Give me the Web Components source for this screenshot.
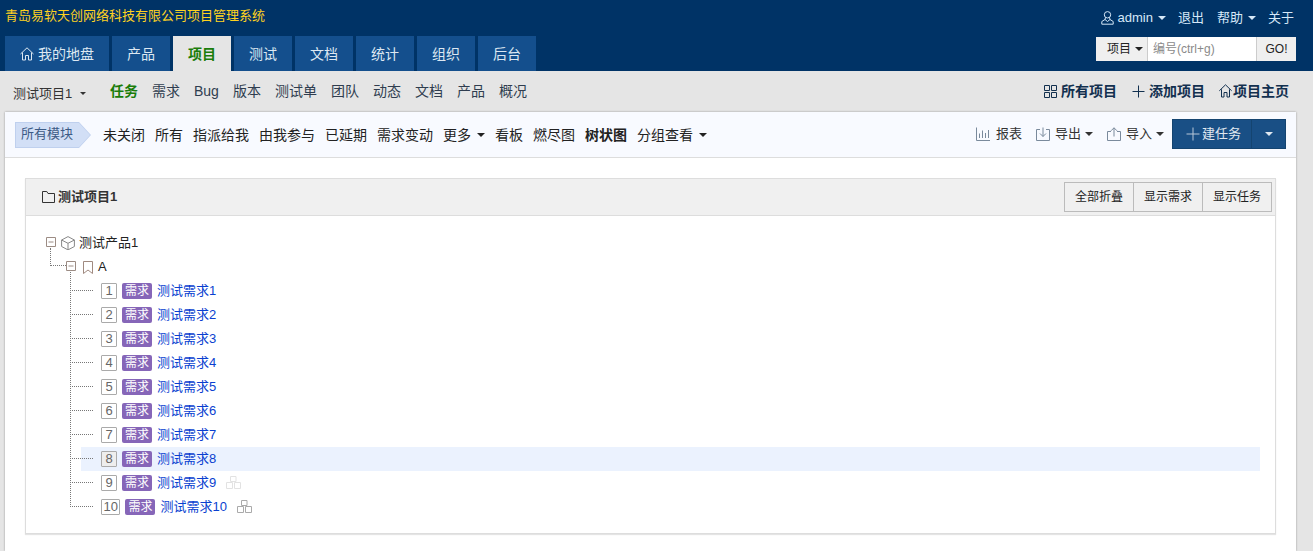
<!DOCTYPE html>
<html lang="zh-CN">
<head>
<meta charset="utf-8">
<title>项目管理系统</title>
<style>
  html, body { margin: 0; height: 100%; overflow: hidden; }
  body {
    background: #e5e5e5;
    color: #333;
    font: 13px/18px "Liberation Sans", "Noto Sans CJK SC", sans-serif;
  }
  zt-page { height: 551px; }
</style>
</head>
<body>
<zt-page>
  <zt-header slot="header" brand="青岛易软天创网络科技有限公司项目管理系统">
    <zt-tab icon="home">我的地盘</zt-tab>
    <zt-tab>产品</zt-tab>
    <zt-tab active>项目</zt-tab>
    <zt-tab>测试</zt-tab>
    <zt-tab>文档</zt-tab>
    <zt-tab>统计</zt-tab>
    <zt-tab>组织</zt-tab>
    <zt-tab>后台</zt-tab>
  </zt-header>
  <zt-subnav slot="subnav"></zt-subnav>
  <zt-toolbar></zt-toolbar>
  <zt-tree-card title="测试项目1">
    <zt-story n="1"></zt-story>
    <zt-story n="2"></zt-story>
    <zt-story n="3"></zt-story>
    <zt-story n="4"></zt-story>
    <zt-story n="5"></zt-story>
    <zt-story n="6"></zt-story>
    <zt-story n="7"></zt-story>
    <zt-story n="8" hover></zt-story>
    <zt-story n="9" sub="faint"></zt-story>
    <zt-story n="10" sub="dark"></zt-story>
  </zt-tree-card>
</zt-page>

<script>
const ICONS = {
  home: '<path d="M.5 7 7 .8 13.500 7M2.500 5.500V13h3V8.500h3V13h3V5.500"/>',
  home13: '<path d="M.3 6.800 6.500.8l6.200 6M2.500 5.300V13h2.500V8.500h3V13h2.500V5.300"/>',
  user: '<circle cx="6.500" cy="3.800" r="3.200"/><path d="M4.500 6.500 4 8.500.8 10.500v2.700h11.400v-2.700L9 8.500l-.5-2M4 8.500l2.500 2 2.500-2"/>',
  grid: '<path d="M.5.5h5v5h-5zM7.500 .5h5v5h-5zM.5 7.500h5v5h-5zM7.500 7.500h5v5h-5z"/>',
  plus: '<path d="M7 .5v13M.5 7h13"/>',
  plus13: '<path d="M6.500 .5v12M.5 6.500h12"/>',
  chart: '<path d="M.5.500v13h13.500M3.500 11V6.500M6.500 11V3.500M9.500 11V6M12.500 11V3"/>',
  down: '<path d="M4 2.500H.5v11h13v-11H10M7 .5v9M4 6.500l3 3 3-3"/>',
  up: '<path d="M4 4.500H.5v9h13v-9H10M7 9.500V.8M4 3.800 7 .8l3 3"/>',
  folder: '<path d="M.5 2v10.500h12v-9H6L4.800 1.500H.5z"/>',
  cube: '<path d="M7 .6 13.400 4v6.500L7 13.900.6 10.500V4zM.6 4 7 7.300 13.400 4M7 7.300v6.600"/>',
  mark: '<path d="M.5.5h9v12L5 9 .5 12.500z"/>',
  minus: '<path d="M.5.5h9v9h-9zM2.500 5h5"/>',
  tree: '<path d="M4.500 .5h5.500v5H4.500zM.5 6.500h6v6h-6zM8.500 6.500h6v6h-6z"/>'
};

class ZtIcon extends HTMLElement {
  connectedCallback() {
    const name = this.getAttribute("name");
    const w = this.getAttribute("w") || 14;
    const h = this.getAttribute("h") || 14;
    this.attachShadow({ mode: "open" }).innerHTML = `
      <style>
        :host { display: inline-flex; flex: none; }
        svg { display: block; fill: none; stroke: currentColor; stroke-width: 1; }
      </style>
      <svg width="${w}" height="${h}" viewBox="0 0 ${w} ${h}">${ICONS[name]}</svg>`;
  }
}
customElements.define("zt-icon", ZtIcon);

class ZtCaret extends HTMLElement {
  connectedCallback() {
    this.attachShadow({ mode: "open" }).innerHTML = `
      <style>
        :host {
          display: inline-block;
          flex: none;
          width: 0;
          height: 0;
          border-top: var(--size, 4px) solid currentColor;
          border-left: var(--size, 4px) solid transparent;
          border-right: var(--size, 4px) solid transparent;
        }
      </style>`;
  }
}
customElements.define("zt-caret", ZtCaret);

class ZtPage extends HTMLElement {
  constructor() {
    super();
    this.attachShadow({ mode: "open" }).innerHTML = `
      <style>
        :host { display: flex; flex-direction: column; }
        .panel {
          flex: 1;
          margin: 1px 17px 0 5px;
          background: #fff;
          box-shadow: 0 0 2px rgba(0, 0, 0, .35);
          min-height: 0;
        }
      </style>
      <slot name="header"></slot>
      <slot name="subnav"></slot>
      <div class="panel"><slot></slot></div>`;
  }
}
customElements.define("zt-page", ZtPage);

class ZtTab extends HTMLElement {
  connectedCallback() {
    const icon = this.getAttribute("icon");
    this.attachShadow({ mode: "open" }).innerHTML = `
      <style>
        :host {
          display: flex;
          align-items: center;
          gap: 4px;
          height: 35px;
          padding: 0 15px;
          background: #144f8d;
          color: #dde8f2;
          font-size: 14px;
        }
        :host([active]) { background: #e5e5e5; color: #1a7d0a; font-weight: bold; }
      </style>
      ${icon ? `<zt-icon name="${icon}"></zt-icon>` : ""}<slot></slot>`;
  }
}
customElements.define("zt-tab", ZtTab);

class ZtHeader extends HTMLElement {
  connectedCallback() {
    this.attachShadow({ mode: "open" }).innerHTML = `
      <style>
        :host {
          display: block;
          height: 71px;
          background: #003366;
          color: #d6e8f8;
        }
        .top {
          display: flex;
          justify-content: space-between;
          align-items: center;
          height: 36px;
          padding: 0 19px 0 5px;
        }
        .brand { color: #ffd21f; margin-bottom: 4px; }
        .links { display: flex; align-items: center; }
        .links span { display: flex; align-items: center; }
        .admin { gap: 4px; font-weight: 500; }
        .nav { display: flex; justify-content: space-between; padding: 0 17px 0 5px; }
        .tabs { display: flex; gap: 3px; }
        .search {
          display: flex;
          height: 24px;
          margin-top: 1px;
          color: #222;
          font-size: 12px;
          line-height: 24px;
        }
        .type, .go { background: #efefef; }
        .type { display: flex; align-items: center; gap: 4px; width: 51px; padding-left: 11px; box-sizing: border-box; font-size: 12px; }
        input {
          width: 110px;
          box-sizing: border-box;
          border: 0;
          border-left: 1px solid #ccc;
          border-right: 1px solid #ccc;
          padding: 0 5px;
          margin: 0;
          background: #fff;
          font: inherit;
        }
        input::placeholder { color: #8a8a8a; opacity: 1; }
        .go { width: 39px; text-align: center; }
      </style>
      <div class="top">
        <div class="brand">${this.getAttribute("brand")}</div>
        <div class="links">
          <span class="admin"><zt-icon name="user" w="13" h="14"></zt-icon>admin<zt-caret style="margin-left:1px"></zt-caret></span>
          <span style="margin-left:12px">退出</span>
          <span style="margin-left:13px;gap:5px">帮助<zt-caret></zt-caret></span>
          <span style="margin-left:12px">关于</span>
        </div>
      </div>
      <div class="nav">
        <div class="tabs"><slot></slot></div>
        <div class="search">
          <div class="type">项目<zt-caret></zt-caret></div>
          <input placeholder="编号(ctrl+g)">
          <div class="go">GO!</div>
        </div>
      </div>`;
  }
}
customElements.define("zt-header", ZtHeader);

class ZtSubnav extends HTMLElement {
  connectedCallback() {
    const items = ["任务", "需求", "Bug", "版本", "测试单", "团队", "动态", "文档", "产品", "概况"];
    this.attachShadow({ mode: "open" }).innerHTML = `
      <style>
        :host {
          display: flex;
          align-items: center;
          height: 40px;
          padding: 0 24px 0 13px;
          color: #2f3d4f;
          font-size: 14px;
        }
        .project { display: flex; align-items: center; gap: 8px; width: 97px; margin-top: 5px; font-size: 13px; color: #333; --size: 3px; }
        .menu { display: flex; gap: 14px; }
        .menu .on { color: #1a7d0a; font-weight: bold; }
        .actions { display: flex; margin-left: auto; color: #12304f; font-weight: bold; }
        .actions span { display: flex; align-items: center; gap: 4px; }
      </style>
      <div class="project">测试项目1<zt-caret></zt-caret></div>
      <div class="menu">${items.map((t, i) => `<span class="${i ? "" : "on"}">${t}</span>`).join("")}</div>
      <div class="actions">
        <span><zt-icon name="grid" w="13" h="13"></zt-icon>所有项目</span>
        <span style="margin-left:15px"><zt-icon name="plus13" w="13" h="13"></zt-icon>添加项目</span>
        <span style="margin-left:14px;gap:1px"><zt-icon name="home13" w="13" h="14"></zt-icon>项目主页</span>
      </div>`;
  }
}
customElements.define("zt-subnav", ZtSubnav);

class ZtToolbar extends HTMLElement {
  connectedCallback() {
    const filters = [
      ["未关闭"], ["所有"], ["指派给我"], ["由我参与"], ["已延期"], ["需求变动"],
      ["更多", "caret"], ["看板"], ["燃尽图"], ["树状图", "bold"], ["分组查看", "caret"]
    ];
    this.attachShadow({ mode: "open" }).innerHTML = `
      <style>
        :host {
          display: flex;
          align-items: center;
          height: 45px;
          padding: 0 10px;
          background: #f8faff;
          border-bottom: 1px solid #ddd;
          color: #222;
        }
        .module {
          position: relative;
          width: 76px;
          height: 26px;
          margin-top: 1px;
          line-height: 23px;
          padding-left: 6px;
          box-sizing: border-box;
          color: #3c5a85;
          background: #bfd0ee;
          clip-path: polygon(0 0, 64px 0, 76px 50%, 64px 100%, 0 100%);
        }
        .module::before {
          content: "";
          position: absolute;
          inset: 1px;
          background: #d2dff6;
          clip-path: polygon(0 0, 63px 0, 74px 50%, 63px 100%, 0 100%);
        }
        .module span { position: relative; }
        .filters { display: flex; gap: 10px; margin-left: 12px; font-size: 14px; }
        .filters span { display: flex; align-items: center; gap: 6px; }
        .bold { font-weight: bold; }
        .right { display: flex; align-items: center; margin: -1px 0 0 auto; color: #333; }
        .right span { display: flex; align-items: center; }
        .right zt-icon { color: #7a8a9c; }
        .new {
          display: flex;
          align-items: center;
          height: 30px;
          margin-left: 8px;
          background: #194f85;
          border: 1px solid #144470;
          box-sizing: border-box;
          color: #e0e8f0;
        }
        .new .main { display: flex; align-items: center; gap: 2px; width: 79px; height: 100%; box-sizing: border-box; padding-left: 13px; border-right: 1px solid #144470; }
        .new .main zt-icon { color: #b9c8d8; }
        .new .more { width: 33px; display: flex; justify-content: center; }
      </style>
      <div class="module"><span>所有模块</span></div>
      <div class="filters">
        ${filters.map(([t, k]) => `<span class="${k === "bold" ? "bold" : ""}">${t}${k === "caret" ? "<zt-caret></zt-caret>" : ""}</span>`).join("")}
      </div>
      <div class="right">
        <span style="gap:6px"><zt-icon name="chart"></zt-icon>报表</span>
        <span style="gap:5px;margin-left:14px"><zt-icon name="down"></zt-icon>导出<zt-caret style="margin-left:-1px"></zt-caret></span>
        <span style="gap:5px;margin-left:14px"><zt-icon name="up"></zt-icon>导入<zt-caret style="margin-left:-1px"></zt-caret></span>
        <div class="new">
          <div class="main"><zt-icon name="plus"></zt-icon>建任务</div>
          <div class="more"><zt-caret></zt-caret></div>
        </div>
      </div>`;
  }
}
customElements.define("zt-toolbar", ZtToolbar);

class ZtTreeCard extends HTMLElement {
  connectedCallback() {
    this.attachShadow({ mode: "open" }).innerHTML = `
      <style>
        :host {
          display: block;
          height: 356px;
          margin: 20px 20px 0;
          box-sizing: border-box;
          border: 1px solid #ddd;
          box-shadow: 0 1px 1px #e4e4e4;
        }
        .head {
          display: flex;
          align-items: center;
          height: 37px;
          box-sizing: border-box;
          padding: 0 3px 0 16px;
          background: #f0f0f0;
          border-bottom: 1px solid #ddd;
        }
        .title { display: flex; align-items: center; gap: 3px; font-weight: bold; color: #333; }
        .title zt-icon { color: #333; }
        .btns { display: flex; margin-left: auto; }
        .btns span {
          width: 70px;
          height: 30px;
          line-height: 28px;
          box-sizing: border-box;
          text-align: center;
          border: 1px solid #bbb;
          margin-left: -1px;
          font-size: 12px;
          color: #222;
        }
        .tree { padding: 15px 15px 0 20px; color: #222; }
        .node { display: flex; align-items: center; height: 24px; }
        .node .tog { color: #9c8c84; margin: -2px 5px 0 0; }
        .node .ic { color: #888; }
        .node .label { margin-top: -1px; }
        .lvl2 { position: relative; margin-left: 20px; }
        .lvl2::before {
          content: "";
          position: absolute;
          left: -16px;
          top: -7px;
          width: 15px;
          height: 17px;
          border-left: 1px dotted #777;
          border-bottom: 1px dotted #777;
        }
        .kids { position: relative; margin-left: 35px; }
        .kids::before {
          content: "";
          position: absolute;
          left: -11px;
          top: -7px;
          bottom: 12px;
          border-left: 1px dotted #777;
        }
      </style>
      <div class="head">
        <div class="title"><zt-icon name="folder" w="13" h="14"></zt-icon>${this.getAttribute("title")}</div>
        <div class="btns"><span>全部折叠</span><span>显示需求</span><span>显示任务</span></div>
      </div>
      <div class="tree">
        <div class="node">
          <zt-icon class="tog" name="minus" w="10" h="10"></zt-icon>
          <zt-icon class="ic" name="cube" style="margin-right:4px"></zt-icon><span class="label">测试产品1</span>
        </div>
        <div class="node lvl2">
          <zt-icon class="tog" name="minus" w="10" h="10" style="margin-right:7px"></zt-icon>
          <zt-icon class="ic" name="mark" w="10" h="13" style="color:#a08a80;margin-right:5px"></zt-icon><span class="label">A</span>
        </div>
        <div class="kids"><slot></slot></div>
      </div>`;
  }
}
customElements.define("zt-tree-card", ZtTreeCard);

class ZtStory extends HTMLElement {
  connectedCallback() {
    const n = this.getAttribute("n");
    const sub = this.getAttribute("sub");
    this.attachShadow({ mode: "open" }).innerHTML = `
      <style>
        :host {
          display: flex;
          align-items: center;
          position: relative;
          height: 24px;
          padding-left: 20px;
        }
        :host([hover]) { background: #ebf2fe; }
        :host::before {
          content: "";
          position: absolute;
          left: -11px;
          top: 11px;
          width: 23px;
          border-top: 1px dotted #777;
        }
        .num {
          min-width: 16px;
          height: 16px;
          box-sizing: border-box;
          padding: 0 1.500px;
          border: 1px solid #aaa;
          border-radius: 1px;
          background: #fff;
          color: #666;
          line-height: 14px;
          text-align: center;
        }
        :host([hover]) .num { background: #eee; }
        .tag {
          margin: 0 5px;
          padding: 0 3px;
          height: 16px;
          line-height: 16px;
          border-radius: 2px;
          background: #8666b8;
          color: #fff;
          font-size: 12px;
        }
        a { color: #0a3fd0; text-decoration: none; margin-top: -1px; }
        zt-icon { margin: -1px 0 0 10px; color: ${sub === "dark" ? "#aaa" : "#e2e2e2"}; }
      </style>
      <span class="num">${n}</span><span class="tag">需求</span><a>测试需求${n}</a>
      ${sub ? `<zt-icon name="tree" w="15" h="13"></zt-icon>` : ""}`;
  }
}
customElements.define("zt-story", ZtStory);
</script>
</body>
</html>
